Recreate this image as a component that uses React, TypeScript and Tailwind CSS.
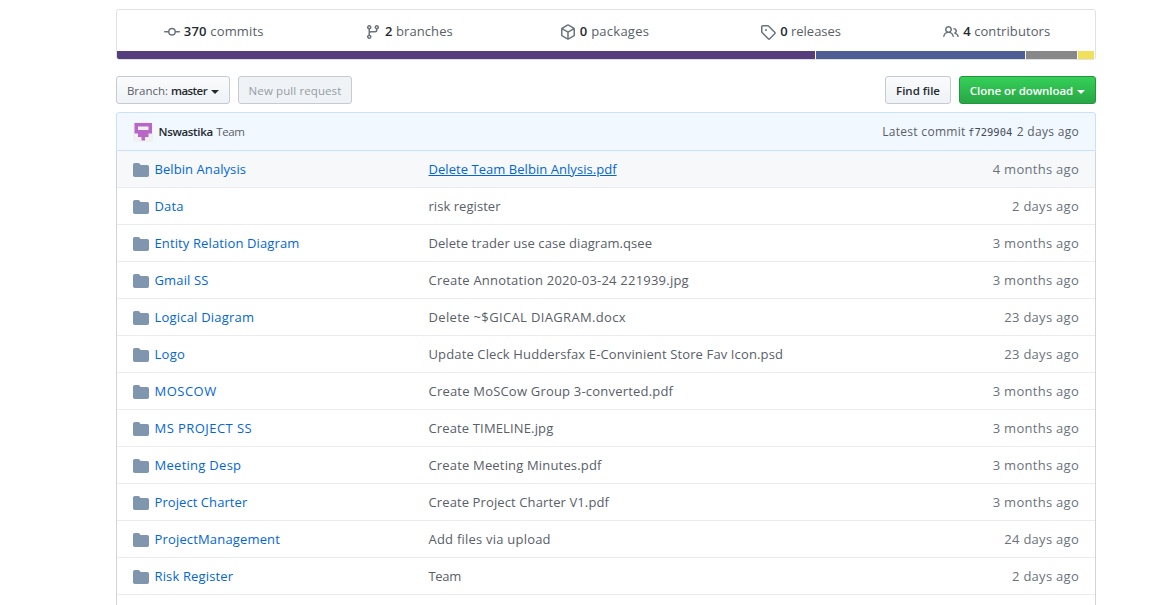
import type { ReactNode } from "react";

const icons = {
  commit:
    "M10.5 7.75a2.5 2.5 0 11-5 0 2.5 2.5 0 015 0zm1.43.75a4.002 4.002 0 01-7.86 0H.75a.75.75 0 110-1.5h3.32a4.001 4.001 0 017.86 0h3.32a.75.75 0 110 1.5h-3.32z",
  branch:
    "M11.75 2.5a.75.75 0 100 1.5.75.75 0 000-1.5zm-2.25.75a2.25 2.25 0 113 2.122V6A2.5 2.5 0 0110 8.5H6a1 1 0 00-1 1v1.128a2.251 2.251 0 11-1.5 0V5.372a2.25 2.25 0 111.5 0v1.836A2.492 2.492 0 016 7h4a1 1 0 001-1v-.628A2.25 2.25 0 019.5 3.25zM4.25 12a.75.75 0 100 1.5.75.75 0 000-1.5zM3.5 3.25a.75.75 0 111.5 0 .75.75 0 01-1.5 0z",
  pkg: "M8.878.392a1.75 1.75 0 00-1.756 0l-5.25 3.045A1.75 1.75 0 001 4.951v6.098c0 .624.332 1.2.872 1.514l5.25 3.045a1.75 1.75 0 001.756 0l5.25-3.045c.54-.313.872-.89.872-1.514V4.951c0-.624-.332-1.2-.872-1.514L8.878.392zM7.875 1.69a.25.25 0 01.25 0l4.63 2.685L8 7.133 3.245 4.375l4.63-2.685zM2.5 5.677v5.372c0 .09.047.171.125.216l4.625 2.683V8.432L2.5 5.677zm6.25 8.271l4.625-2.683a.25.25 0 00.125-.216V5.677L8.75 8.432v5.516z",
  tag: "M2.5 7.775V2.75a.25.25 0 01.25-.25h5.025a.25.25 0 01.177.073l6.25 6.25a.25.25 0 010 .354l-5.025 5.025a.25.25 0 01-.354 0l-6.25-6.25a.25.25 0 01-.073-.177zm-1.5 0V2.75C1 1.784 1.784 1 2.75 1h5.025c.464 0 .91.184 1.238.513l6.25 6.25a1.75 1.75 0 010 2.474l-5.026 5.026a1.75 1.75 0 01-2.474 0l-6.25-6.25A1.75 1.75 0 011 7.775zM6 5a1 1 0 100 2 1 1 0 000-2z",
  people:
    "M5.5 3.5a2 2 0 100 4 2 2 0 000-4zM2 5.5a3.5 3.5 0 115.898 2.549 5.507 5.507 0 013.034 4.084.75.75 0 11-1.482.235 4.001 4.001 0 00-7.9 0 .75.75 0 01-1.482-.236A5.507 5.507 0 013.102 8.05 3.49 3.49 0 012 5.5zM11 4a.75.75 0 100 1.5 1.5 1.5 0 01.666 2.844.75.75 0 00-.416.672v.352a.75.75 0 00.574.73c1.2.289 2.162 1.2 2.522 2.372a.75.75 0 101.434-.44 5.01 5.01 0 00-2.56-3.012A3 3 0 0011 4z",
  folder:
    "M1.75 1A1.75 1.75 0 000 2.75v10.5C0 14.216.784 15 1.75 15h12.5A1.75 1.75 0 0016 13.25v-8.5A1.75 1.75 0 0014.25 3h-6.5a.25.25 0 01-.2-.1l-.9-1.2c-.33-.44-.85-.7-1.4-.7h-3.5z",
};

function Icon({ name, className }: { name: keyof typeof icons; className: string }) {
  return (
    <svg viewBox="0 0 16 16" width="16" height="16" fill="currentColor" fillRule="evenodd" className={"shrink-0 " + className}>
      <path d={icons[name]} />
    </svg>
  );
}

const stats: { icon: keyof typeof icons; count: string; label: string; pad: string }[] = [
  { icon: "commit", count: "370", label: "commits", pad: "pr-0.5 tracking-[0.18px]" },
  { icon: "branch", count: "2", label: "branches", pad: "pr-[3px] tracking-[0.1px]" },
  { icon: "pkg", count: "0", label: "packages", pad: "pr-[3px] tracking-[0.25px]" },
  { icon: "tag", count: "0", label: "releases", pad: "pr-0.5" },
  { icon: "people", count: "4", label: "contributors", pad: "pr-px tracking-[0.08px]" },
];

const files = [
  { name: "Belbin Analysis", message: "Delete Team Belbin Anlysis.pdf", age: "4 months ago", nameTrack: "tracking-[0.07px]", messageTrack: "tracking-[0.05px]" },
  { name: "Data", message: "risk register", age: "2 days ago", nameTrack: "tracking-[0.15px]", messageTrack: "tracking-[0.05px]" },
  { name: "Entity Relation Diagram", message: "Delete trader use case diagram.qsee", age: "3 months ago", nameTrack: "tracking-[0.12px]", messageTrack: "tracking-[0.07px]" },
  { name: "Gmail SS", message: "Create Annotation 2020-03-24 221939.jpg", age: "3 months ago", nameTrack: "tracking-[0.15px]", messageTrack: "tracking-[0.22px]" },
  { name: "Logical Diagram", message: "Delete ~$GICAL DIAGRAM.docx", age: "23 days ago", nameTrack: "tracking-[0.2px]", messageTrack: "tracking-[0.35px]" },
  { name: "Logo", message: "Update Cleck Huddersfax E-Convinient Store Fav Icon.psd", age: "23 days ago", nameTrack: "tracking-[0.3px]", messageTrack: "tracking-[0.13px]" },
  { name: "MOSCOW", message: "Create MoSCow Group 3-converted.pdf", age: "3 months ago", nameTrack: "tracking-[0.5px]", messageTrack: "tracking-[0.2px]" },
  { name: "MS PROJECT SS", message: "Create TIMELINE.jpg", age: "3 months ago", nameTrack: "tracking-[0.45px]", messageTrack: "tracking-[0.14px]" },
  { name: "Meeting Desp", message: "Create Meeting Minutes.pdf", age: "3 months ago", nameTrack: "tracking-[0.28px]", messageTrack: "tracking-[0.17px]" },
  { name: "Project Charter", message: "Create Project Charter V1.pdf", age: "3 months ago", nameTrack: "tracking-[0.07px]", messageTrack: "tracking-[0.11px]" },
  { name: "ProjectManagement", message: "Add files via upload", age: "24 days ago", nameTrack: "tracking-[0.16px]", messageTrack: "tracking-[0.22px]" },
  { name: "Risk Register", message: "Team", age: "2 days ago", nameTrack: "tracking-[0.14px]", messageTrack: "tracking-[-0.3px]" },
];

function Button({ className, children }: { className: string; children: ReactNode }) {
  return (
    <button className={"flex h-7 items-center justify-center rounded-[3px] border pt-px text-[11.5px] font-semibold whitespace-nowrap " + className}>
      {children}
    </button>
  );
}

function Caret() {
  return <span className="ml-1 mt-0.5 border-x-4 border-t-4 border-x-transparent border-t-current" />;
}

export default function App() {
  return (
    <div className="h-[605px] overflow-hidden bg-white pt-[9px] pl-[116px] font-['Open_Sans','Noto_Sans',sans-serif] text-[13px] leading-5 text-[#586069]">
      <div className="w-[980px]">
        <div className="overflow-hidden rounded-[3px] border border-[#dfe2e5]">
          <div className="grid h-[41px] grid-cols-5 pt-px">
            {stats.map((s) => (
              <div key={s.label} className={"flex items-center justify-center gap-1 whitespace-nowrap " + s.pad}>
                <Icon name={s.icon} className="mt-0.5 text-[#6a737d]" />
                <span>
                  <span className="font-semibold text-[#24292e]">{s.count}</span> {s.label}
                </span>
              </div>
            ))}
          </div>
          <div className="flex h-2 gap-px">
            <div className="w-[698px] bg-[#563d7c]" />
            <div className="w-[209px] bg-[#4F5D95]" />
            <div className="w-[51px] bg-[#888888]" />
            <div className="w-4 bg-[#f1e05a]" />
          </div>
        </div>

        <div className="mt-4 flex">
          <Button className="w-[114px] border-[#c6cbd1] bg-linear-to-b from-[#fafbfc] to-[#eff3f6] text-[#24292e]">
            <span className="mr-[3px] font-normal text-[#586069]">Branch:</span>
            <span className="tracking-[-0.55px]">master</span>
            <Caret />
          </Button>
          <Button className="ml-2 w-[114px] border-[#c6cbd1] bg-[#eff3f6] font-normal! tracking-[0.1px] text-[#959da5]">New pull request</Button>
          <Button className="ml-auto w-[66px] border-[#c6cbd1] bg-linear-to-b from-[#fafbfc] to-[#eff3f6] text-[#24292e]">Find file</Button>
          <Button className="ml-2 w-[137px] border-[#23963d] bg-linear-to-b from-[#34d058] to-[#28a745] tracking-[-0.06px] text-white">
            Clone or download
            <Caret />
          </Button>
        </div>

        <div className="mt-2 flex h-[39px] items-center rounded-t-[3px] border border-[#c8e1ff] bg-[#f1f8ff] px-4 text-[12px]">
          <svg width="20" height="20" viewBox="0 0 20 20" className="shrink-0">
            <rect width="20" height="20" rx="3" fill="#f0f0f0" />
            <path
              fill="#b866c8"
              fillRule="evenodd"
              d="M1.5 1h17.5v10.5h-3.5v3.5h-3.5v3.5h-3.5v-3.5h-3.5v-3.5h-3.5zM5 4.5v3.5h10.5v-3.5z"
            />
          </svg>
          <span className="ml-[5.5px] text-[11.5px] font-semibold tracking-[-0.33px] text-[#24292e]">Nswastika</span>
          <span className="ml-[3.5px] text-[11.5px] tracking-[-0.4px]">Team</span>
          <span className="ml-auto tracking-[0.3px]">
            Latest commit <span className="mr-px -ml-px font-['DejaVu_Sans_Mono',monospace] text-[10.5px] tracking-normal text-[#444d56]">f729904</span> 2 days ago
          </span>
        </div>
        <div className="border-x border-[#d1d5da]">
          {files.map((f, i) => (
            <div key={f.name} className={"flex h-[37px] items-center border-b border-[#eaecef] px-4 whitespace-nowrap " + (i === 0 ? "bg-[#f6f8fa]" : "")}>
              <Icon name="folder" className="mt-0.5 text-[#8096ae]" />
              <span className={"ml-[5.5px] w-[274px] text-[#0366d6] " + f.nameTrack}>{f.name}</span>
              <span className={f.messageTrack + (i === 0 ? " text-[#0366d6] underline" : "")}>{f.message}</span>
              <span className="ml-auto tracking-[0.28px] text-[#6a737d]">{f.age}</span>
            </div>
          ))}
          <div className="h-10" />
        </div>
      </div>
    </div>
  );
}
